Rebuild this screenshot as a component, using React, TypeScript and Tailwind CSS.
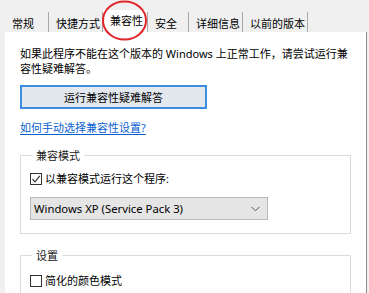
import React from "react";

const font = { fontFamily: '"Noto Sans", "Noto Sans CJK SC", sans-serif' };

function Tab({ label, w, active }: { label: string; w: string; active?: boolean }) {
  if (active) {
    return (
      <div className={`${w} h-[22px] bg-white pl-[7px] pt-[3px] text-[11px] leading-[15px] text-black`}>
        {label}
      </div>
    );
  }
  return (
    <div className={`${w} h-[20px] border-r border-[#a9a9a9] pl-[7px] pt-[4px] text-[11px] leading-[15px] text-black`}>
      {label}
    </div>
  );
}

function Checkbox({ checked }: { checked?: boolean }) {
  return (
    <span className="flex h-[12px] w-[12px] items-center justify-center border border-[#333] bg-white">
      {checked && (
        <svg width="10" height="10" viewBox="0 0 10 10">
          <path d="M1.5 5.2 L4 7.8 L8.8 1.8" fill="none" stroke="#333" strokeWidth="1.2" />
        </svg>
      )}
    </span>
  );
}

export default function App() {
  return (
    <div className="relative h-[293px] w-[369px] overflow-hidden bg-[#f0f0f0]" style={font}>
      {/* tabs */}
      <div className="flex h-[32px] items-end pl-[5px]">
        <Tab label="常规" w="w-[44px]" />
        <Tab label="快捷方式" w="w-[54px]" />
        <Tab label="兼容性" w="w-[44px]" active />
        <Tab label="安全" w="w-[42px] border-l border-[#a9a9a9]" />
        <Tab label="详细信息" w="w-[54px]" />
        <Tab label="以前的版本" w="w-[65px]" />
      </div>

      {/* panel */}
      <div className="ml-[5px] mr-[2px] h-[261px] border-r border-[#8c8c8c] bg-white pl-[15px] pr-[15px] pt-[14px] text-[11px] leading-[15px] text-black">
        <p className="whitespace-nowrap">
          如果此程序不能在这个版本的 Windows 上正常工作，请尝试运行兼
          <br />
          容性疑难解答。
        </p>

        <button className="mt-[9px] flex h-[24px] w-[187px] items-center justify-center border-2 border-[#3d8ee0] bg-[#e3e8ef] text-[11px] text-black">
          运行兼容性疑难解答
        </button>

        <a className="mt-[11px] block text-[#0a5fd0] underline underline-offset-2">如何手动选择兼容性设置?</a>

        <fieldset className="mt-[13px] h-[86px] w-[331px] border border-[#dcdcdc] px-[9px]">
          <legend className="ml-[2px] px-[4px] text-[#222]">兼容模式</legend>
          <label className="mt-[8px] flex items-center gap-[3px]">
            <Checkbox checked />
            <span>以兼容模式运行这个程序:</span>
          </label>
          <div className="mt-[11px] flex h-[23px] w-[238px] items-center justify-between border border-[#b8b8b8] bg-[#e5e5e5] pl-[3px] pr-[7px] text-[11.3px]">
            <span>Windows XP (Service Pack 3)</span>
            <svg width="9" height="6" viewBox="0 0 9 6">
              <path d="M0.5 0.8 L4.5 4.8 L8.5 0.8" fill="none" stroke="#555" strokeWidth="1" />
            </svg>
          </div>
        </fieldset>

        <fieldset className="mt-[14px] h-[60px] w-[331px] border border-[#dcdcdc] px-[9px]">
          <legend className="ml-[2px] px-[4px] text-[#222]">设置</legend>
          <label className="mt-[10px] flex items-center gap-[3px]">
            <Checkbox />
            <span>简化的颜色模式</span>
          </label>
        </fieldset>
      </div>

      {/* red annotation circle */}
      <svg className="absolute left-0 top-0" width="369" height="60" viewBox="0 0 369 60">
        <ellipse cx="124.5" cy="20.5" rx="21.5" ry="19" fill="none" stroke="#e0262a" strokeWidth="2" />
      </svg>
    </div>
  );
}
